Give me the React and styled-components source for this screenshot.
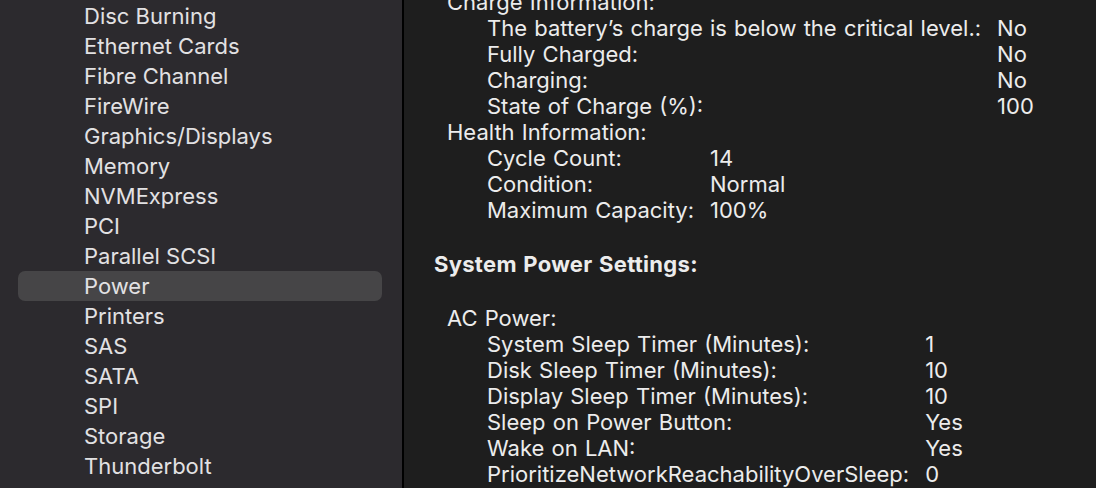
import styled, { createGlobalStyle } from 'styled-components'

const GlobalStyle = createGlobalStyle`
  html, body {
    margin: 0;
    padding: 0;
    height: 100%;
    overflow: hidden;
    background: #1e1e1e;
  }
  #root {
    height: 100%;
  }
`

const categories = [
  'Disc Burning',
  'Ethernet Cards',
  'Fibre Channel',
  'FireWire',
  'Graphics/Displays',
  'Memory',
  'NVMExpress',
  'PCI',
  'Parallel SCSI',
  'Power',
  'Printers',
  'SAS',
  'SATA',
  'SPI',
  'Storage',
  'Thunderbolt',
  'USB',
]

const chargeInfo = [
  ['The battery’s charge is below the critical level.:', 'No'],
  ['Fully Charged:', 'No'],
  ['Charging:', 'No'],
  ['State of Charge (%):', '100'],
]

const healthInfo = [
  ['Cycle Count:', '14'],
  ['Condition:', 'Normal'],
  ['Maximum Capacity:', '100%'],
]

const acPower = [
  ['System Sleep Timer (Minutes):', '1'],
  ['Disk Sleep Timer (Minutes):', '10'],
  ['Display Sleep Timer (Minutes):', '10'],
  ['Sleep on Power Button:', 'Yes'],
  ['Wake on LAN:', 'Yes'],
  ['PrioritizeNetworkReachabilityOverSleep:', '0'],
]

const InfoTable = ({ rows }) => (
  <Table>
    {rows.map(([key, value]) => (
      <Row key={key}>
        <Key>{key}</Key>
        <Value>{value}</Value>
      </Row>
    ))}
  </Table>
)

const App = () => (
  <>
    <GlobalStyle />
    <Window>
      <Sidebar>
        {categories.map(name => (
          <SidebarItem key={name} $selected={name === 'Power'}>
            {name}
          </SidebarItem>
        ))}
      </Sidebar>
      <Detail>
        <Content>
          <GroupTitle>Charge Information:</GroupTitle>
          <InfoTable rows={chargeInfo} />
          <GroupTitle>Health Information:</GroupTitle>
          <InfoTable rows={healthInfo} />
          <SectionTitle>System Power Settings:</SectionTitle>
          <GroupTitle>AC Power:</GroupTitle>
          <InfoTable rows={acPower} />
        </Content>
      </Detail>
    </Window>
  </>
)

const Window = styled.div`
  display: flex;
  height: 100%;
  overflow: hidden;
  font-family: Inter, "Liberation Sans", sans-serif;
  font-size: 22px;
`
const Sidebar = styled.nav`
  width: 402px;
  flex-shrink: 0;
  padding-top: 1px;
  background: #2c2a2e;
  border-right: 2px solid #000;
  overflow: hidden;
`
const SidebarItem = styled.div`
  height: 30px;
  line-height: 30px;
  margin: 0 20px 0 18px;
  padding-left: 66px;
  border-radius: 7px;
  color: #e2e1e3;
  white-space: nowrap;
  background: ${p => (p.$selected ? '#464547' : 'transparent')};
`
const Detail = styled.main`
  flex: 1;
  background: #1e1e1e;
  padding-left: 30px;
  overflow: hidden;
  color: #ececec;
  word-spacing: 1px;
`
const Content = styled.div`
  margin-top: -11px;
  line-height: 26px;
`
const GroupTitle = styled.div`
  padding-left: 13px;
`
const SectionTitle = styled.div`
  font-weight: 700;
  letter-spacing: 0.3px;
  margin: 28px 0;
`
const Table = styled.div`
  display: grid;
  grid-template-columns: max-content max-content;
  column-gap: 16px;
  padding-left: 53px;
`
const Row = styled.div`
  display: contents;
`
const Key = styled.span`
  white-space: nowrap;
`
const Value = styled.span`
  white-space: nowrap;
`

export default App
